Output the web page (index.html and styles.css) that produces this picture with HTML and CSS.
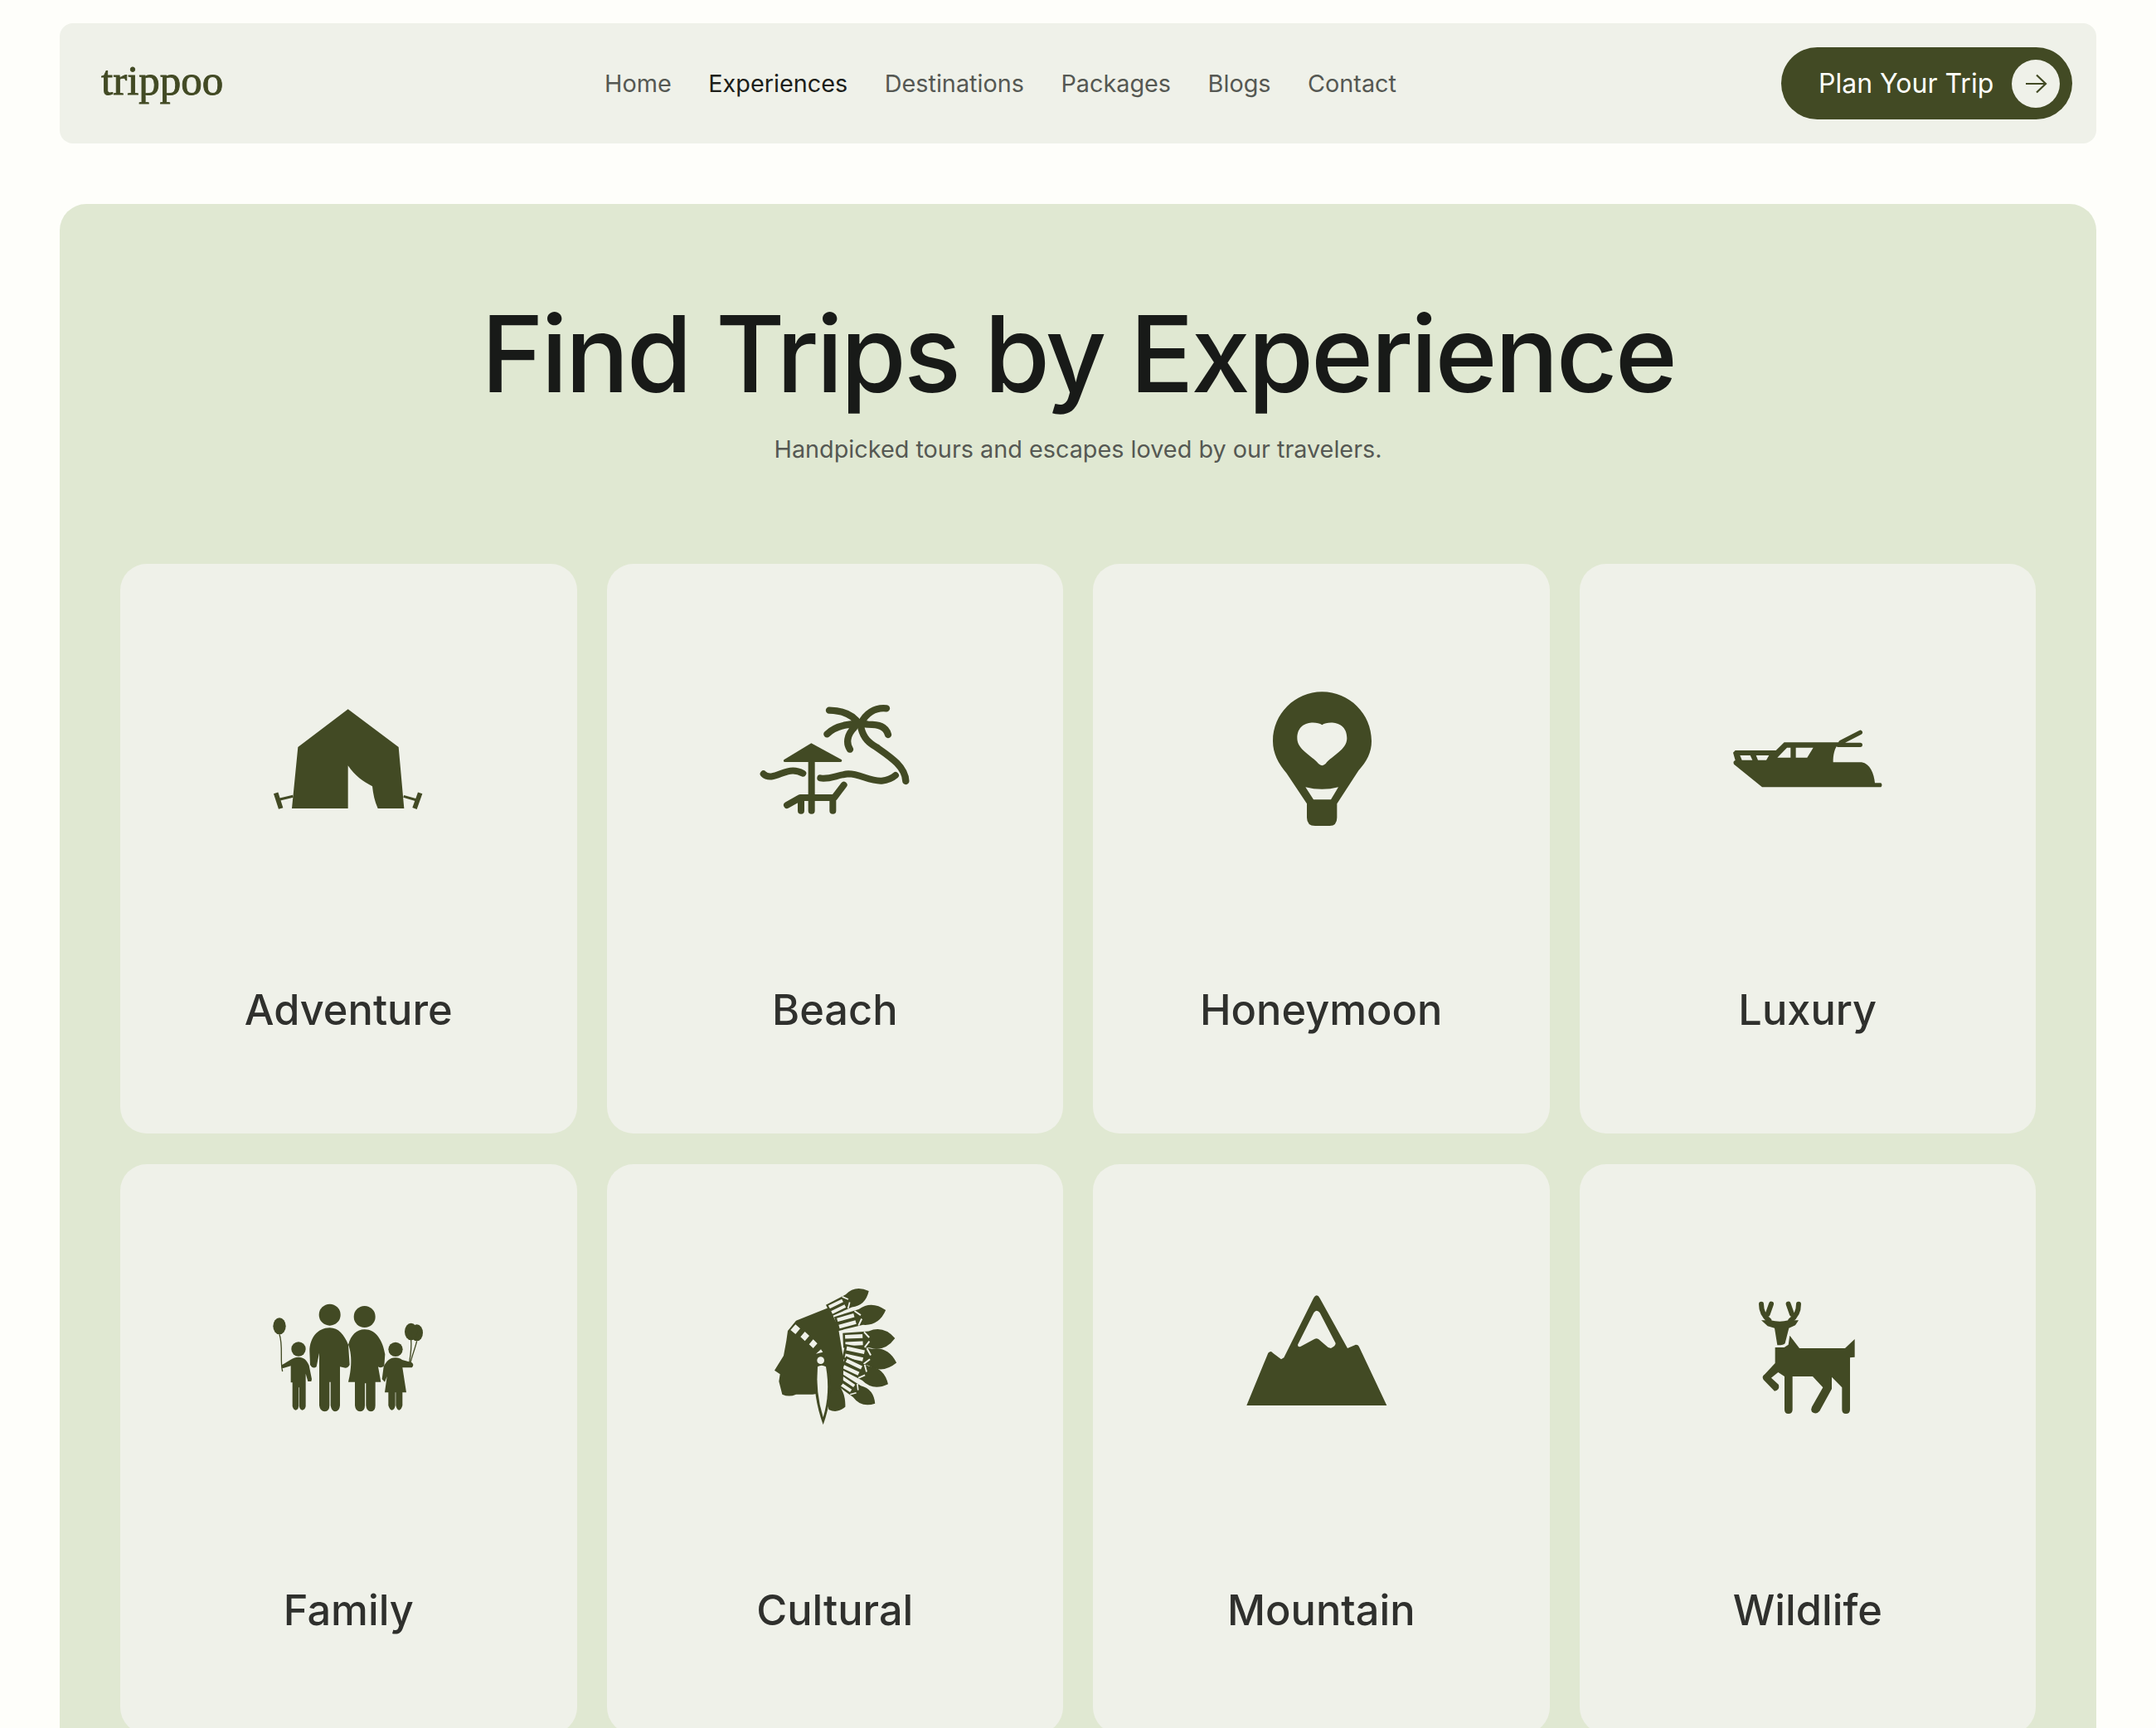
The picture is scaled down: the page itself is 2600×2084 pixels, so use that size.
FILE: index.html
```html
<!DOCTYPE html>
<html lang="en">
<head>
<meta charset="utf-8">
<title>trippoo</title>
<link rel="stylesheet" href="styles.css">
</head>
<body>
<header class="nav">
  <a class="logo">trippoo</a>
  <nav class="links">
    <a>Home</a><a class="active">Experiences</a><a>Destinations</a><a>Packages</a><a>Blogs</a><a>Contact</a>
  </nav>
  <a class="cta"><span>Plan Your Trip</span>
    <span class="cta-dot"><svg viewBox="0 0 30 30" width="30" height="30"><path d="M3 15H27M16 4.5L27 15L16 25.5" fill="none" stroke="#424a24" stroke-width="2.2"/></svg></span>
  </a>
</header>
<main class="hero">
  <h1>Find Trips by Experience</h1>
  <p class="sub">Handpicked tours and escapes loved by our travelers.</p>
  <section class="grid">
    <article class="card">
      <svg class="icon" viewBox="0 0 720 720"><g transform="translate(30 90)">
        <path class="f" d="M329 73L512 210L532 432H437C425 405 420 380 417 352C385 335 355 315 329 277V432H126L148 210Z"/>
        <path class="s" stroke-width="9" d="M130 388L80 400M530 388L578 402"/>
        <path class="s" stroke-width="17" d="M68 376L86 432M590 376L570 432"/>
      </g></svg>
      <h2>Adventure</h2>
    </article>
    <article class="card">
      <svg class="icon" viewBox="0 0 720 720"><g transform="translate(39 90)">
        <path class="s r" stroke-width="25" d="M300 77C350 78 390 95 410 130M507 70C465 65 430 90 415 125M292 163C325 130 390 120 440 128C480 128 505 135 513 165M375 218C360 195 365 165 390 140M415 140C425 180 445 195 470 210C520 245 575 280 577 333"/>
        <path class="s r" stroke-width="24" d="M62 307C85 330 120 305 150 298C170 293 190 297 205 305M268 322C300 328 330 310 370 307C410 307 450 335 490 332C510 330 525 325 540 312M147 420L195 393H318L353 347M198 393V440M313 393V440M236 258V440"/>
        <path class="f" d="M235 196L345 256Q348 264 340 264H140Q132 264 136 256Z"/>
      </g></svg>
      <h2>Beach</h2>
    </article>
    <article class="card">
      <svg class="icon" viewBox="0 0 720 720"><g transform="translate(111 60)">
        <path class="f" fill-rule="evenodd" d="M253 40C155 40 75 120 75 218C75 262 95 300 125 335L198 445V495Q198 525 228 525H280Q307 525 307 495V445L385 325C415 290 432 260 432 218C432 120 352 40 253 40ZM253 160C230 145 163 145 163 208C163 250 215 270 240 300Q253 313 266 300C290 270 343 250 343 208C343 145 275 145 253 160ZM193 385Q253 400 312 385L285 430H222Z"/>
      </g></svg>
      <h2>Honeymoon</h2>
    </article>
    <article class="card">
      <svg class="icon" viewBox="0 0 720 720"><g transform="translate(60 180)">
        <path class="f" fill-rule="evenodd" d="M38 132H185L215 103H415C395 125 392 150 392 175H495C525 180 540 215 543 250H565Q572 257 565 265H135L33 182Q28 172 38 168L30 140ZM55 150H92L100 167H62ZM113 150H160L150 167H120ZM190 158L225 122H238V158ZM257 122H320L298 158H257Z"/>
        <path class="s r" stroke-width="16" d="M420 103L490 67M410 112H490"/>
      </g></svg>
      <h2>Luxury</h2>
    </article>
    <article class="card">
      <svg class="icon" viewBox="0 0 720 720"><g transform="translate(60 105)">
        <circle class="f" cx="233" cy="77" r="39"/><circle class="f" cx="359" cy="84" r="39"/>
        <path class="f" d="M233 124C190 124 160 160 160 210L162 258Q172 275 185 265L195 215V405Q198 427 215 427Q232 427 232 405V320H236V405Q240 427 252 427Q268 427 270 405V265L283 268Q298 272 305 258L300 185C285 150 265 124 233 124Z"/>
        <path class="f" d="M359 130C330 130 310 150 300 185C318 230 308 290 300 320H324V405Q326 427 343 427Q360 427 360 405V325H364V405Q366 427 382 427Q398 427 398 405V320H418L408 265Q418 272 430 262L433 220C425 170 400 130 359 130Z"/>
        <circle class="f" cx="120" cy="201" r="26"/><circle class="f" cx="471" cy="202" r="26"/>
        <path class="f" d="M120 230C100 230 85 245 60 258Q55 270 65 270L92 262V322H98V408Q102 422 110 422Q120 420 120 408V340H122V408Q126 422 134 422Q144 420 146 408V290L154 318H166L168 310L158 260C150 240 138 230 120 230Z"/>
        <path class="f" d="M471 232C450 232 438 245 428 265L422 310L432 320L440 300L432 358H445V405Q450 422 458 422Q468 420 470 405V358H472V405Q476 422 484 422Q492 420 496 405V358H510L496 268L530 268Q540 258 530 250L495 240C488 235 480 232 471 232Z"/>
        <ellipse class="f" cx="51" cy="118" rx="23" ry="30"/><ellipse class="f" cx="548" cy="142" rx="22" ry="30"/><ellipse class="f" cx="527" cy="138" rx="23" ry="31"/>
        <path class="s" stroke-width="4" d="M51 148C65 190 52 240 62 282M527 168C530 200 525 225 520 255M548 172C540 205 530 225 524 255"/>
      </g></svg>
      <h2>Family</h2>
    </article>
    <article class="card">
      <svg class="icon" viewBox="0 0 720 720">
        <defs>
          <g id="feather">
            <path class="f" d="M0 -27L95 -30Q150 -50 190 0Q150 50 95 30L0 27Z"/>
            <path class="l" d="M8 -20H72V-6H8ZM8 6H72V20H8Z"/>
            <path class="w" d="M78 -28L96 -7M78 28L96 7"/>
          </g>
        </defs>
        <g transform="translate(99 45)">
        <use href="#feather" transform="translate(238 122) rotate(-26) scale(.85)"/>
        <use href="#feather" transform="translate(265 170) rotate(-15.5) scale(.98)"/>
        <use href="#feather" transform="translate(290 230) rotate(-2.5) scale(.99)"/>
        <use href="#feather" transform="translate(292 270) rotate(12) scale(1.03)"/>
        <use href="#feather" transform="translate(290 310) rotate(25.5) scale(.95)"/>
        <use href="#feather" transform="translate(275 370) rotate(34) scale(.83)"/>
        <path class="f" d="M298 470Q270 495 238 480L225 400L270 385Q300 420 298 470Z"/>
        <path class="f" d="M90 195L120 158L240 110L272 180L292 300L290 385L270 410L180 425L120 425Q95 436 70 425L58 378L62 352L42 338L75 285L85 230Z"/>
        <path class="f" d="M188 330Q180 430 218 535Q256 430 240 330Z"/>
        <path class="l" d="M198 325Q190 420 218 508Q245 420 228 325Q212 315 198 325Z"/>
        <circle class="l" cx="209" cy="302" r="13"/>
        <path class="l" d="M118 172L135 187L118 207L100 192ZM152 198L168 213L152 232L136 217ZM182 226L197 241L182 258L167 244ZM210 262L217 272L192 278Z"/>
      </g></svg>
      <h2>Cultural</h2>
    </article>
    <article class="card">
      <svg class="icon" viewBox="0 0 720 720"><g transform="translate(51 75)">
        <path class="f" fill-rule="evenodd" d="M293 37Q300 37 305 47L405 228L435 215Q445 215 448 225L547 435H40L118 245Q128 235 135 245L165 268L175 262L283 45Q288 37 293 37ZM293 92Q288 92 283 100L225 215Q225 225 235 222L285 195Q293 190 300 195L335 225L345 228Q362 220 362 210L305 100Q300 92 293 92Z"/>
      </g></svg>
      <h2>Mountain</h2>
    </article>
    <article class="card">
      <svg class="icon" viewBox="0 0 720 720"><g transform="translate(120 105)">
        <path class="s r" stroke-width="18" d="M72 38C72 65 85 85 100 97M108 38L95 75M207 38C207 65 195 85 178 97M170 38L183 75"/>
        <path class="f" d="M72 97H105Q140 105 170 97H207L195 115L172 125L158 180Q155 187 130 187L120 125L95 118Z"/>
        <path class="f" d="M122 195H155L170 185L175 152L210 198H375L410 165V230L393 232V420Q393 435 378 435Q364 435 364 420V340L327 302V345L283 425Q270 440 255 428Q250 420 255 410L295 340L258 300H185V420Q185 435 170 435Q156 435 156 420V300L133 285L108 305L135 330Q140 350 120 353L80 312Q72 300 85 292L122 252Z"/>
      </g></svg>
      <h2>Wildlife</h2>
    </article>
  </section>
</main>
</body>
</html>
```
FILE: styles.css
```css
* { box-sizing: border-box; }
html, body { margin: 0; height: 2084px; overflow: hidden; }
body { background: #fefefa; padding: 28px 72px 0; font-family: Inter, sans-serif; }
.nav { height: 145px; background: #eff1e9; border-radius: 16px; display: flex; align-items: center; justify-content: space-between; padding: 0 29px 0 50px; }
.logo { font-family: "Liberation Serif", serif; font-size: 51px; line-height: 56px; color: #424a24; width: 146px; -webkit-text-stroke: 0.9px #424a24; margin-top: -7px; }
.links { display: flex; gap: 44.5px; font-size: 28.8px; color: #555853; margin-right: 3px; }
.links .active { color: #1c1e1a; }
.cta { width: 351px; height: 87px; background: #424a24; border-radius: 44px; color: #fefefa; font-size: 32px; display: flex; align-items: center; justify-content: space-between; padding: 0 15px 0 45px; }
.cta-dot { width: 58px; height: 58px; border-radius: 50%; background: #eff1e9; display: flex; align-items: center; justify-content: center; }
.hero { margin-top: 73px; background: #e0e8d2; border-radius: 32px; padding: 103px 73px 73px; text-align: center; }
h1 { margin: 0; font-size: 128px; line-height: 156px; font-weight: 500; letter-spacing: -3px; color: #181a18; }
.sub { margin: 17px 0 0; font-size: 28.8px; line-height: 40px; color: #555853; }
.grid { margin-top: 118px; display: grid; grid-template-columns: repeat(4, 1fr); gap: 37px 36px; }
.card { height: 687px; background: #eff1e9; border-radius: 32px; padding-top: 121px; display: flex; flex-direction: column; align-items: center; }
.icon { width: 240px; height: 240px; display: block; }
h2 { margin: 141px 0 0; font-size: 50.5px; line-height: 72px; font-weight: 500; color: #2f302d; }
.f { fill: #424a24; }
.l { fill: #eff1e9; }
.s { fill: none; stroke: #424a24; }
.r { stroke-linecap: round; stroke-linejoin: round; }
.w { fill: none; stroke: #eff1e9; stroke-width: 6; }
```
